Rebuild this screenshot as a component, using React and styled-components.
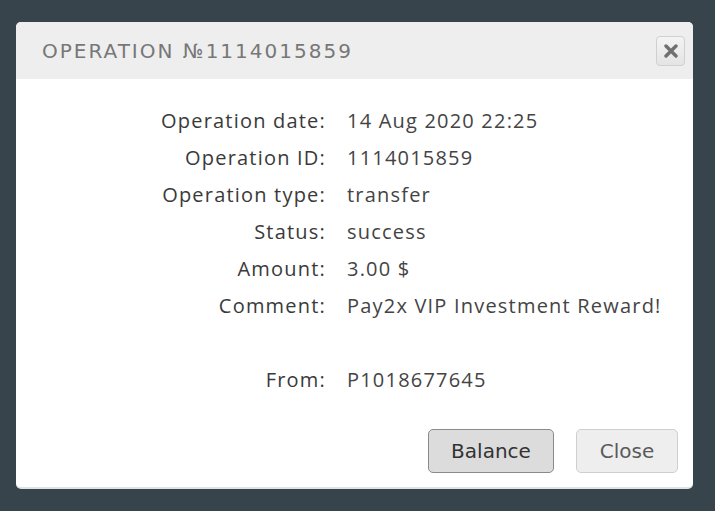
import React from "react";
import styled, { createGlobalStyle } from "styled-components";

const Global = createGlobalStyle`
  html, body { margin: 0; padding: 0; background: #37444c; }
  body { width: 715px; height: 511px; overflow: hidden; }
`;

const Page = styled.div`
  padding: 22px 22px 0 16px;
`;

const Dialog = styled.div`
  width: 677px;
  height: 467px;
  box-sizing: border-box;
  background: #fff;
  border-radius: 5px;
  overflow: hidden;
  display: flex;
  flex-direction: column;
  border-bottom: 2px solid #dfe3e6;
`;

const Header = styled.div`
  height: 57px;
  flex: none;
  background: #eeeeee;
  display: flex;
  align-items: center;
  justify-content: space-between;
  padding: 0 8px 0 26px;
`;

const Title = styled.h1`
  margin: 0;
  font-family: "DejaVu Sans", sans-serif;
  font-weight: normal;
  font-size: 20px;
  letter-spacing: 2px;
  color: #777;
  padding-top: 1px;
`;

const CloseX = styled.button`
  width: 29px;
  height: 30px;
  border: 1px solid #d0d0d0;
  border-radius: 4px;
  background: linear-gradient(#f4f4f4, #e4e4e4);
  display: flex;
  align-items: center;
  justify-content: center;
  padding: 0;
`;

const Body = styled.div`
  flex: 1;
  padding: 23px 0 0 0;
  display: flex;
  flex-direction: column;
`;

const Grid = styled.dl`
  margin: 0;
  display: grid;
  grid-template-columns: 310px 1fr;
  column-gap: 21px;
  grid-auto-rows: 37px;
  font-family: "Open Sans", sans-serif;
  font-size: 20px;
  letter-spacing: 1.2px;
  color: #3a3a3a;
`;

const Label = styled.dt`
  text-align: right;
  line-height: 37px;
`;

const Value = styled.dd`
  margin: 0;
  line-height: 37px;
  color: #444;
`;

const Spacer = styled.div`
  grid-column: 1 / -1;
`;

const Actions = styled.div`
  margin-top: 31px;
  display: flex;
  justify-content: flex-end;
  gap: 22px;
  padding-right: 15px;
`;

const Button = styled.button`
  height: 44px;
  width: ${(p) => p.$w}px;
  font-family: "DejaVu Sans", sans-serif;
  font-size: 20px;
  border-radius: 5px;
  color: ${(p) => (p.$primary ? "#333" : "#5a5a5a")};
  border: 1px solid ${(p) => (p.$primary ? "#8a8a8a" : "#cfcfcf")};
  background: ${(p) => (p.$primary ? "#dcdcdc" : "#eeeeee")};
  padding: 0;
`;

const rows = [
  ["Operation date:", "14 Aug 2020 22:25"],
  ["Operation ID:", "1114015859"],
  ["Operation type:", "transfer"],
  ["Status:", "success"],
  ["Amount:", "3.00 $"],
  ["Comment:", "Pay2x VIP Investment Reward!"],
];

export default function App() {
  return (
    <Page>
      <Global />
      <Dialog>
        <Header>
          <Title>OPERATION №1114015859</Title>
          <CloseX aria-label="close">
            <svg width="14" height="14" viewBox="0 0 14 14">
              <path d="M2 2 L12 12 M12 2 L2 12" stroke="#707070" strokeWidth="3.4" strokeLinecap="round" />
            </svg>
          </CloseX>
        </Header>
        <Body>
          <Grid>
            {rows.map(([l, v]) => (
              <React.Fragment key={l}>
                <Label>{l}</Label>
                <Value>{v}</Value>
              </React.Fragment>
            ))}
            <Spacer />
            <Label>From:</Label>
            <Value>P1018677645</Value>
          </Grid>
          <Actions>
            <Button $primary $w={126}>Balance</Button>
            <Button $w={102}>Close</Button>
          </Actions>
        </Body>
      </Dialog>
    </Page>
  );
}
